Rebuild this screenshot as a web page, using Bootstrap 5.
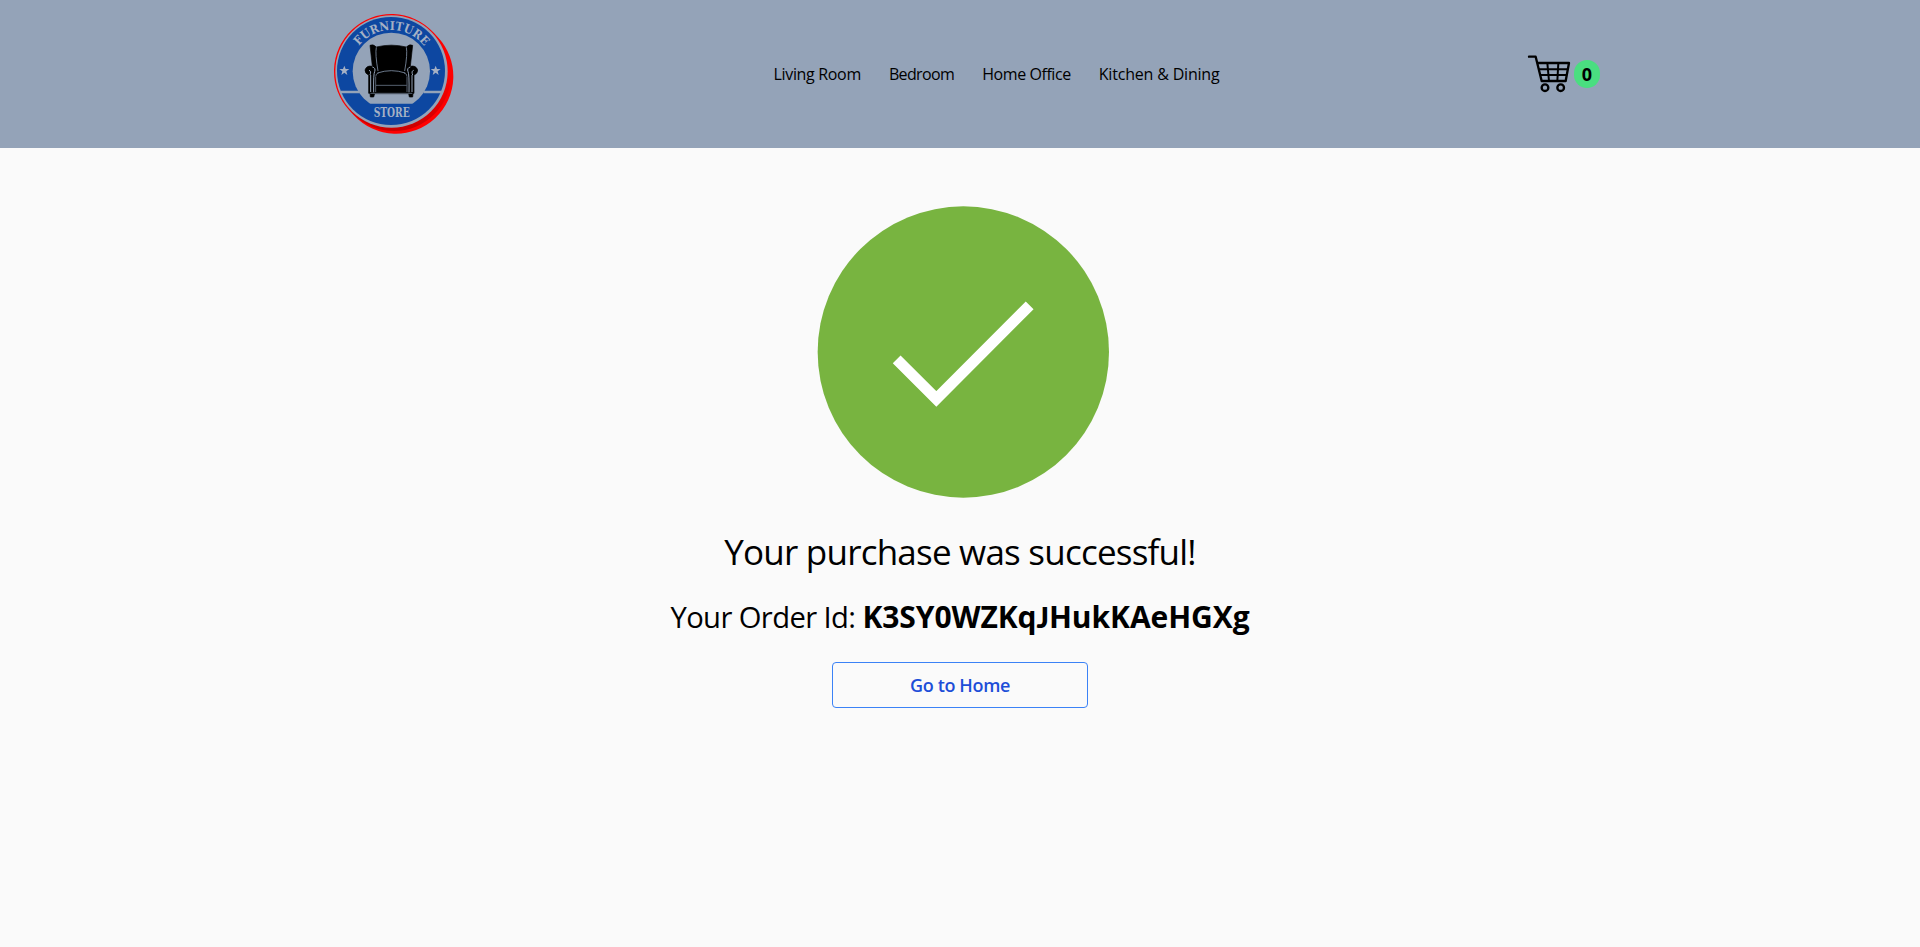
<!DOCTYPE html>
<html lang="en">
<head>
<meta charset="utf-8">
<meta name="viewport" content="width=device-width, initial-scale=1">
<title>Furniture Store</title>
<link href="https://cdn.jsdelivr.net/npm/bootstrap@5.3.0/dist/css/bootstrap.min.css" rel="stylesheet">
<style>
body{background:#fafafa;color:#000;font-family:"Open Sans","Noto Sans",sans-serif}
.site-header{background:#94a3b8;height:148px}
.site-wrap{width:1280px}
.brand-logo{width:140px;height:140px;margin-left:4px}
.menu{gap:28px;margin-left:3px}
.menu .nav-link{color:#000;font-size:16px;line-height:24px}
.menu .nav-link:nth-child(1){letter-spacing:-.33px}
.menu .nav-link:nth-child(2){letter-spacing:-.63px}
.menu .nav-link:nth-child(3){letter-spacing:-.43px}
.menu .nav-link:nth-child(4){letter-spacing:-.19px}
.cart-icon{width:46px;height:44px}
.count{background:#4ade80;width:26px;height:28px;font-size:18px;line-height:29px;margin-left:2px}
.tick{width:320px;height:320px;margin-top:42px}
.title{font-size:35px;line-height:40px;margin-top:22px;letter-spacing:-.78px}
.order{font-size:29.2px;line-height:36px;margin-top:27px;letter-spacing:-.6px}
.order strong{font-size:30px;letter-spacing:-.07px}
.order .cap-j{font-family:Lato,sans-serif;font-weight:900;font-size:29px;line-height:1}
.btn-home{width:256px;height:46px;border:1px solid #3b82f6;color:#1d4ed8;font-size:18px;font-weight:600;line-height:44px;letter-spacing:-.35px;border-radius:4px;margin-top:27px}
</style>
</head>
<body>
<header class="site-header">
<div class="site-wrap mx-auto h-100 d-flex align-items-center justify-content-between">
<a href="#" aria-label="Furniture Store">
<svg class="brand-logo d-block" viewBox="0 0 420 420">
<defs>
<linearGradient id="rim" x1="0" y1="0" x2="0" y2="1"><stop offset=".5" stop-color="#f00"/><stop offset="1" stop-color="#c80000"/></linearGradient>
<path id="arc" d="M79 201A123 123 0 0 1 325 201"/>
<path id="star" d="M0-15L4-5 15-5 6 2 9 13 0 6-9 13-6 2-15-5-4-5Z"/>
</defs>
<path d="M202 202L216 217" stroke="#f00" stroke-width="344" stroke-linecap="round"/>
<circle cx="210" cy="210" r="171" fill="url(#rim)"/>
<circle cx="202.500" cy="202.500" r="168.500" fill="#94a3b8"/>
<circle cx="201" cy="201" r="162" fill="#0d47a1"/>
<circle cx="202" cy="202" r="116" fill="#94a3b8"/>
<path d="M50 264H105M299 264H352" stroke="#94a3b8" stroke-width="7"/>
<path d="M125 299H279L250 328H154Z" fill="#0d47a1"/>
<g fill="#a5b1c5">
<use href="#star" x="61" y="200"/><use href="#star" x="335" y="200"/>
<g font-family="DejaVu Serif, serif" font-weight="bold">
<text font-size="36" textLength="226" lengthAdjust="spacingAndGlyphs"><textPath href="#arc" startOffset="81" textLength="226" lengthAdjust="spacingAndGlyphs">FURNITURE</textPath></text>
<text x="149" y="339" font-size="36" textLength="108" lengthAdjust="spacingAndGlyphs">STORE</text>
</g>
</g>
<g stroke="#000" stroke-width="2">
<path d="M138 124Q147 119 157 129Q202 118 247 129Q257 119 266 124L259 187Q276 183 281 198Q281 209 270 213V268H267L266 279H256L254 269H152L149 279H139L138 268H134V213Q123 209 123 198Q128 183 145 187Z"/>
<path d="M157 130Q153 150 162 201M247 130Q251 150 242 201M160 207Q202 193 244 207" fill="none" stroke="#8190a6" stroke-width="2.500"/>
<path d="M145 189Q156 192 152 203Q148 209 149 265M259 189Q248 192 252 203Q256 209 255 265M138 213Q143 201 135 199M266 213Q261 201 269 199M140 213V264M264 213V264" fill="none" stroke="#94a3b8" stroke-width="3"/>
<path d="M155 218Q155 208 164 207M249 218Q249 208 240 207M155 219V264M249 219V264M156 244H248M139 268H265" fill="none" stroke="#8190a6" stroke-width="2"/>
</g>
</svg>
</a>
<nav class="nav menu">
<a class="nav-link p-0" href="#">Living Room</a><a class="nav-link p-0" href="#">Bedroom</a><a class="nav-link p-0" href="#">Home Office</a><a class="nav-link p-0" href="#">Kitchen &amp; Dining</a>
</nav>
<a class="d-flex align-items-center text-black text-decoration-none" href="#">
<svg class="cart-icon" viewBox="48 36 138 132" fill="none" stroke="#000" stroke-width="7">
<path d="M57 50H77L95 123H167L177 69H84" stroke-linejoin="round" stroke-linecap="round"/>
<path d="M87 88H173M91 105H170M112 69L117 123M145 69L142 123" stroke-width="6"/>
<circle cx="105" cy="143" r="10"/><circle cx="152" cy="143" r="10"/>
</svg>
<span class="count rounded-pill text-center fw-bold">0</span>
</a>
</div>
</header>
<main class="d-flex flex-column align-items-center">
<svg class="tick" viewBox="0 0 960 960"><circle cx="490" cy="486" r="437" fill="#78b440"/><path d="M290 508L409 627L689 346" fill="none" stroke="#fff" stroke-width="33"/></svg>
<h1 class="title fw-normal mb-0">Your purchase was successful!</h1>
<p class="order mb-0">Your Order Id: <strong>K3SY0WZKq<span class="cap-j">J</span>HukKAeHGXg</strong></p>
<a class="btn btn-home p-0" href="#">Go to Home</a>
</main>
</body>
</html>
